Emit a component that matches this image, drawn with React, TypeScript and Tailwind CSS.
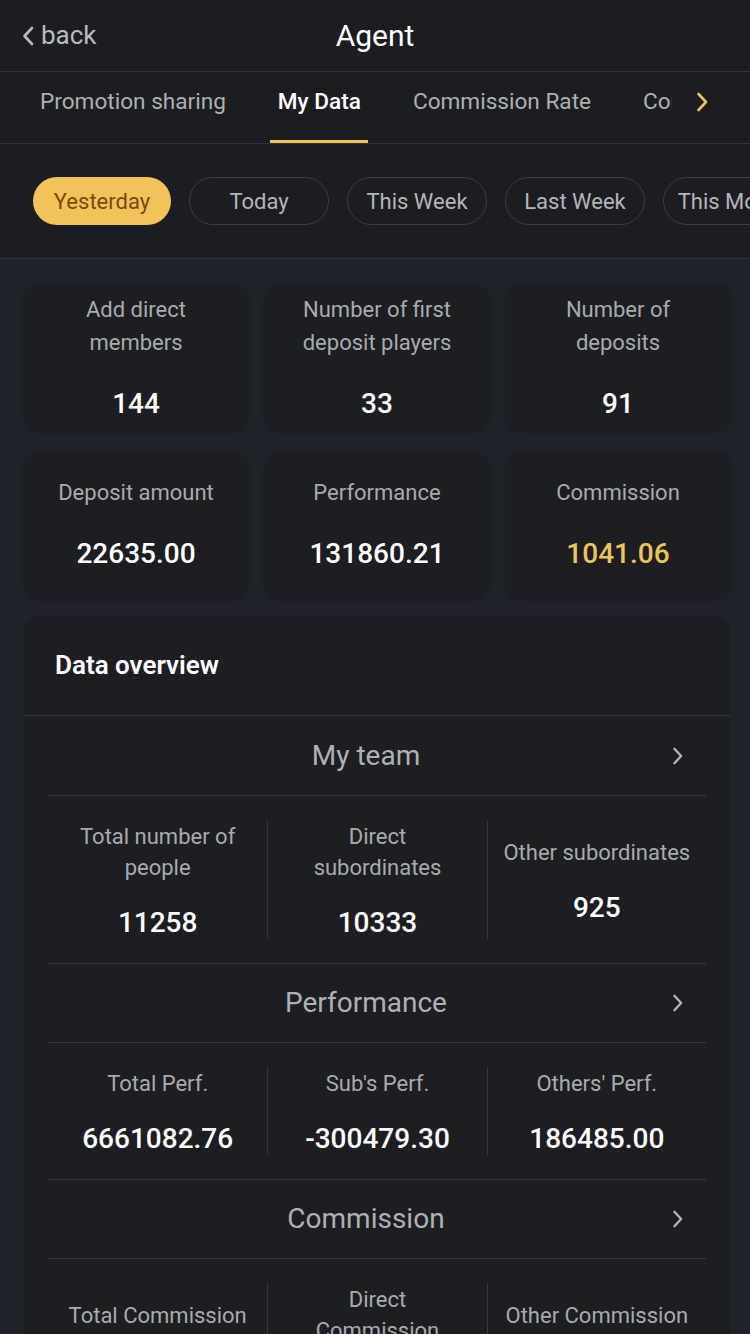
import React from "react";

const chips = ["Yesterday", "Today", "This Week", "Last Week", "This Month"];
const tabs = ["Promotion sharing", "My Data", "Commission Rate", "Commission"];

const cards = [
  { label: ["Add direct", "members"], value: "144" },
  { label: ["Number of first", "deposit players"], value: "33" },
  { label: ["Number of", "deposits"], value: "91" },
  { label: ["Deposit amount"], value: "22635.00" },
  { label: ["Performance"], value: "131860.21" },
  { label: ["Commission"], value: "1041.06", gold: true },
];

const sections = [
  {
    title: "My team",
    stats: [
      { label: ["Total number of", "people"], value: "11258" },
      { label: ["Direct", "subordinates"], value: "10333" },
      { label: ["Other subordinates"], value: "925" },
    ],
  },
  {
    title: "Performance",
    stats: [
      { label: ["Total Perf."], value: "6661082.76" },
      { label: ["Sub's Perf."], value: "-300479.30" },
      { label: ["Others' Perf."], value: "186485.00" },
    ],
  },
  {
    title: "Commission",
    stats: [
      { label: ["Total Commission"], value: "1041.06" },
      { label: ["Direct", "Commission"], value: "893.20" },
      { label: ["Other Commission"], value: "147.86" },
    ],
  },
];

function Chevron({ className }: { className?: string }) {
  return (
    <svg className={className} viewBox="0 0 12 20" fill="none">
      <path d="M2 2l7.5 8L2 18" stroke="currentColor" strokeWidth="2.6" strokeLinecap="round" strokeLinejoin="round" />
    </svg>
  );
}

export default function App() {
  return (
    <div className="w-[750px] h-[1334px] overflow-hidden bg-[#1f2229] text-white font-['Roboto','Liberation_Sans',sans-serif]">
      {/* header */}
      <div className="relative h-[72px] flex items-center justify-center bg-[#1c1d21] border-b border-[#2f3136]">
        <div className="absolute left-[22px] top-0 h-full flex items-center gap-[7px] text-[26px] text-[#b9bbbe]">
          <svg className="w-[12px] h-[20px]" viewBox="0 0 12 20" fill="none">
            <path d="M10 2L2.5 10l7.5 8" stroke="currentColor" strokeWidth="2.6" strokeLinecap="round" strokeLinejoin="round" />
          </svg>
          <span>back</span>
        </div>
        <span className="text-[30px] text-white">Agent</span>
      </div>

      {/* tabs */}
      <div className="relative h-[72px] bg-[#1c1d21] border-b border-[#2f3136] overflow-hidden">
        <div className="flex h-full items-stretch gap-[52px] pl-[40px] whitespace-nowrap">
          {tabs.map((t) => (
            <div key={t} className="relative h-full flex items-center pb-[12px]">
              <span className={t === "My Data" ? "text-[22.6px] font-medium text-white" : "text-[22.6px] text-[#aeb0b3]"}>{t}</span>
              {t === "My Data" && <div className="absolute -left-[8px] -right-[7px] bottom-0 h-[3px] bg-[#f0c35a]" />}
            </div>
          ))}
        </div>
        <div className="absolute right-0 top-0 h-full w-[78px] bg-[#1c1d21] flex items-center pl-[24px] pb-[12px]">
          <Chevron className="w-[13px] h-[20px] text-[#f0c35a]" />
        </div>
      </div>

      {/* filter chips */}
      <div className="h-[115px] bg-[#1c1d21] border-b border-[#30333b] overflow-hidden">
        <div className="flex gap-[18px] pl-[33px] pt-[33px] whitespace-nowrap">
          {chips.map((c, i) => (
            <div
              key={c}
              className={
                i === 0
                  ? "shrink-0 w-[138px] h-[48px] rounded-full bg-[#f2c35b] flex items-center justify-center text-[22px] text-[#7b4a06]"
                  : "shrink-0 w-[140px] h-[48px] rounded-full border border-[#3a3d43] flex items-center justify-center text-[22px] text-[#b4b6b9]"
              }
            >
              {c}
            </div>
          ))}
        </div>
      </div>

      {/* summary cards */}
      <div className="grid grid-cols-3 gap-x-[17px] gap-y-[20px] pl-[24px] pr-[20px] pt-[25px]">
        {cards.map((c, i) => (
          <div
            key={i}
            className={
              i < 3
                ? "h-[148px] rounded-[16px] bg-[#1c1e22] shadow-[0_0_6px_rgba(0,0,0,0.15)] flex flex-col items-center justify-center gap-[30px] pb-[4px]"
                : "h-[148px] rounded-[16px] bg-[#1c1e22] shadow-[0_0_6px_rgba(0,0,0,0.15)] flex flex-col items-center justify-center gap-[30px] pb-[8px]"
            }
          >
            <div className="text-center text-[22px] leading-[33px] text-[#a9abae]">
              {c.label.map((l) => (
                <div key={l}>{l}</div>
              ))}
            </div>
            <div className={c.gold ? "text-[28px] font-medium leading-[30px] text-[#f0c35a]" : "text-[28px] font-medium leading-[30px] text-white"}>{c.value}</div>
          </div>
        ))}
      </div>

      {/* data overview */}
      <div className="ml-[24px] mr-[20px] mt-[16px] rounded-t-[16px] bg-[#1c1e22]">
        <div className="h-[100px] flex items-center pl-[31px] border-b border-[#34373d]">
          <span className="text-[26px] font-semibold text-white">Data overview</span>
        </div>
        <div className="px-[24px]">
          {sections.map((s, si) => (
            <div key={s.title}>
              <div className={si === 0 ? "h-[80px] flex items-center border-b border-[#34373d]" : "h-[80px] flex items-center border-y border-[#34373d]"}>
                <span className="flex-1 text-center pl-[12px] text-[28px] text-[#afb1b4]">{s.title}</span>
                <Chevron className="w-[12px] h-[18px] mr-[22px] text-[#b4b6b9]" />
              </div>
              <div className="py-[24px] grid grid-cols-3">
                {s.stats.map((st, i) => (
                  <div
                    key={i}
                    className={
                      i === 0
                        ? "flex flex-col items-center justify-center gap-[25px] py-[1px]"
                        : "flex flex-col items-center justify-center gap-[25px] py-[1px] border-l border-[#34373d]"
                    }
                  >
                    <div className="text-center text-[22px] leading-[31px] text-[#a9abae]">
                      {st.label.map((l) => (
                        <div key={l}>{l}</div>
                      ))}
                    </div>
                    <div className="text-[28px] font-medium leading-[30px] text-white">{st.value}</div>
                  </div>
                ))}
              </div>
            </div>
          ))}
        </div>
      </div>
    </div>
  );
}
